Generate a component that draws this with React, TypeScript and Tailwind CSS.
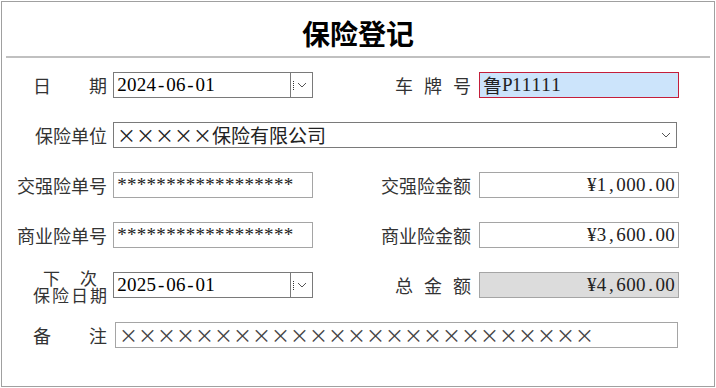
const cjk = "font-['Noto_Sans_CJK_SC',sans-serif]";
const val = "font-['Liberation_Serif','Noto_Sans_CJK_SC',serif]";

// SimSun-like half-width cells: every latin char takes the same width
const Mono = ({ text }: { text: string }) => (
  <span className="inline-flex">
    {text.split("").map((c, i) => (
      <span key={i} className="inline-block w-[9.8px] text-center">
        {c}
      </span>
    ))}
  </span>
);

const Chevron = () => (
  <svg width="10" height="6" viewBox="0 0 10 6" className="shrink-0">
    <path d="M1 1 L5 5 L9 1" fill="none" stroke="#555" strokeWidth="1" />
  </svg>
);

const Label = ({ children, wide }: { children: React.ReactNode; wide?: boolean }) => (
  <div className="w-[105px] shrink-0 flex justify-end">
    {wide ? <span>{children}</span> : <span className="w-[74px] flex justify-between">{children}</span>}
  </div>
);

const RightLabel = ({ children, spread }: { children: React.ReactNode; spread?: boolean }) => (
  <div className="flex-1 flex justify-end pr-[8px]">
    {spread ? <span className="w-[76px] flex justify-between">{children}</span> : <span>{children}</span>}
  </div>
);

const DateBox = ({ value }: { value: string }) => (
  <div className="flex h-[26px] w-[200px] shrink-0">
    <div className={`flex-1 border border-[#7a7a7a] bg-white pl-[3px] flex items-center text-[19px] text-black ${val}`}>
      <Mono text={value} />
    </div>
    <div className="w-[22px] border border-l-0 border-[#7a7a7a] bg-white flex items-center gap-[3px] pl-[2px]">
      <span className="w-[1px] h-[9px] border-l border-dotted border-[#333]" />
      <Chevron />
    </div>
  </div>
);

const TextBox = ({ children, right, grey, className = "" }: { children: React.ReactNode; right?: boolean; grey?: boolean; className?: string }) => (
  <div
    className={`h-[26px] border border-[#a5a5a5] flex items-center text-[19px] text-[#222] ${val} ${
      right ? "justify-end pr-[3px]" : "pl-[3px]"
    } ${grey ? "bg-[#dcdcdc]" : "bg-white"} ${className}`}
  >
    {children}
  </div>
);

export default function App() {
  return (
    <div className={`m-[1px] w-[714px] h-[386px] border border-[#a0a0a0] bg-white text-[#333] text-[18px] ${cjk}`}>
      <div className="h-[54px] pt-[8px] flex items-center justify-center">
        <h1 className="text-[28px] font-bold text-black leading-none">保险登记</h1>
      </div>
      <div className="mx-[4px] h-[2px] bg-[#c0c0c0]" />

      <div className="pt-[14px] flex flex-col gap-[24px]">
        {/* 日期 / 车牌号 */}
        <div className="flex items-center h-[26px]">
          <Label>
            <span>日</span>
            <span>期</span>
          </Label>
          <div className="w-[6px] shrink-0" />
          <DateBox value="2024-06-01" />
          <RightLabel spread>
            <span>车</span>
            <span>牌</span>
            <span>号</span>
          </RightLabel>
          <div className={`w-[200px] h-[26px] mr-[35px] border border-[#c41e3a] bg-[#cce4fb] pl-[3px] flex items-center text-[19px] text-[#222] ${val}`}>
            <span className={cjk}>鲁</span>
            <Mono text="P11111" />
          </div>
        </div>

        {/* 保险单位 */}
        <div className="flex items-center h-[26px]">
          <Label wide>保险单位</Label>
          <div className="w-[6px] shrink-0" />
          <div className="w-[564px] h-[26px] border border-[#7a7a7a] bg-white pl-[3px] pr-[5px] flex items-center justify-between text-[19px] text-[#222]">
            <span>×××××保险有限公司</span>
            <Chevron />
          </div>
        </div>

        {/* 交强险 */}
        <div className="flex items-center h-[26px]">
          <Label wide>交强险单号</Label>
          <div className="w-[6px] shrink-0" />
          <TextBox className="w-[200px] shrink-0">
            <Mono text="******************" />
          </TextBox>
          <RightLabel>交强险金额</RightLabel>
          <TextBox right className="w-[200px] mr-[35px]">
            <Mono text="¥1,000.00" />
          </TextBox>
        </div>

        {/* 商业险 */}
        <div className="flex items-center h-[26px]">
          <Label wide>商业险单号</Label>
          <div className="w-[6px] shrink-0" />
          <TextBox className="w-[200px] shrink-0">
            <Mono text="******************" />
          </TextBox>
          <RightLabel>商业险金额</RightLabel>
          <TextBox right className="w-[200px] mr-[35px]">
            <Mono text="¥3,600.00" />
          </TextBox>
        </div>

        {/* 下次保险日期 / 总金额 */}
        <div className="flex items-center h-[26px]">
          <div className="w-[105px] shrink-0 flex justify-end">
            <div className="w-[74px] flex flex-col text-[17px] leading-[17px] pt-[2px]">
              <span className="flex justify-between px-[10px]">
                <span>下</span>
                <span>次</span>
              </span>
              <span className="flex justify-between">
                <span>保</span>
                <span>险</span>
                <span>日</span>
                <span>期</span>
              </span>
            </div>
          </div>
          <div className="w-[6px] shrink-0" />
          <DateBox value="2025-06-01" />
          <RightLabel spread>
            <span>总</span>
            <span>金</span>
            <span>额</span>
          </RightLabel>
          <TextBox right grey className="w-[200px] mr-[35px] border-[#999]">
            <Mono text="¥4,600.00" />
          </TextBox>
        </div>

        {/* 备注 */}
        <div className="flex items-center h-[26px]">
          <Label>
            <span>备</span>
            <span>注</span>
          </Label>
          <div className="w-[8px] shrink-0" />
          <div className={`w-[563px] h-[26px] border border-[#a5a5a5] bg-white pl-[3px] flex items-center text-[19px] text-[#444] ${cjk}`}>
            ×××××××××××××××××××××××××
          </div>
        </div>
      </div>
    </div>
  );
}
